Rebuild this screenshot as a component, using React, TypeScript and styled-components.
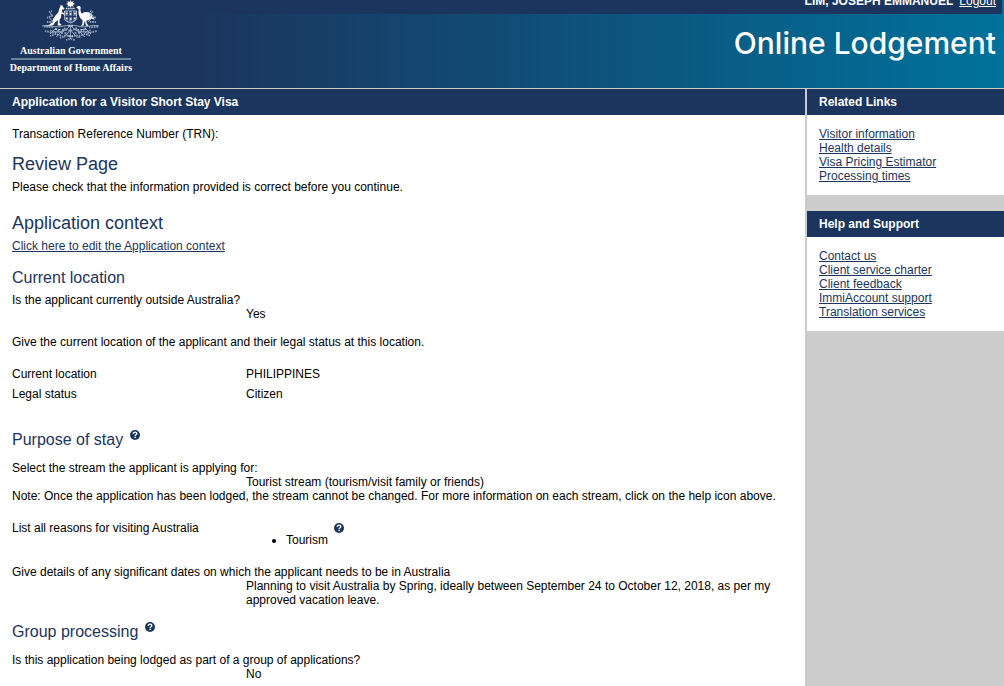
import React from "react";
import styled, { createGlobalStyle } from "styled-components";

const navy = "#1b355e";
const grey = "#cccccc";

const GlobalStyle = createGlobalStyle`
  *, *::before, *::after { box-sizing: border-box; }
  html, body { margin: 0; background: ${grey}; }
  body {
    font-family: "Liberation Sans", Arial, Helvetica, sans-serif;
    font-size: 12px;
    line-height: 14px;
    color: #000;
  }
  p, h1, h2, h3, ul, dl, dd { margin: 0; padding: 0; }
`;

const Page = styled.div`
  display: flex;
  flex-direction: column;
  min-height: 100vh;
`;

const Banner = styled.header`
  display: flex;
  justify-content: space-between;
  height: 89px;
  border-bottom: 1px solid ${grey};
  background: linear-gradient(to right, ${navy} 20%, #00729b 100%);
`;

const Brand = styled.div`
  display: flex;
  flex-direction: column;
  align-items: center;
  width: 120px;
  margin-left: 11px;
  font-family: "Liberation Serif", "Times New Roman", serif;
  font-size: 10px;
  font-weight: bold;
  color: #fff;
  white-space: nowrap;
`;

const Crest = styled.svg`
  width: 58px;
  height: 42px;
  flex: none;
`;

const Government = styled.span`
  align-self: stretch;
  height: 18px;
  line-height: 17px;
  text-align: center;
  border-bottom: 2px solid #6c7f9f;
`;

const Department = styled.span`
  line-height: 16px;
`;

const BannerSide = styled.div`
  display: flex;
  flex-direction: column;
  flex: 1;
`;

const AccountBar = styled.div`
  display: flex;
  justify-content: flex-end;
  gap: 6px;
  height: 14px;
  margin-right: 2px;
  padding-right: 6px;
  overflow: hidden;
  line-height: 3px;
  font-weight: bold;
  color: #fff;
  background: ${navy};
`;

const LogoutLink = styled.a`
  color: #fff;
  font-weight: normal;
`;

const ProductName = styled.h1`
  padding: 12px 8px 0;
  font-family: Inter, Lato, sans-serif;
  font-size: 30px;
  font-weight: 500;
  line-height: 34px;
  text-align: right;
  color: #fff;
`;

const Columns = styled.div`
  display: grid;
  grid-template-columns: minmax(0, 1fr) 197px;
  column-gap: 2px;
  flex: 1;
`;

const Main = styled.main`
  background: #fff;
`;

const Sidebar = styled.aside`
  display: flex;
  flex-direction: column;
  gap: 16px;
`;

const PanelTitle = styled.h2`
  padding: 0 12px;
  font-size: 12px;
  font-weight: bold;
  line-height: 26px;
  color: #fff;
  background: ${navy};
`;

const LinkPanel = styled.nav`
  background: #fff;
`;

const LinkList = styled.ul`
  padding: 12px 12px 12px;
  list-style: none;
`;

const TextLink = styled.a`
  color: ${navy};
`;

const Content = styled.div`
  padding: 12px 12px 5px;
`;

const Section = styled.section<{ $gap: number }>`
  padding-top: ${(p) => p.$gap}px;
`;

const Heading = styled.h2`
  margin-bottom: 5px;
  font-size: 18px;
  font-weight: normal;
  line-height: 22px;
  color: ${navy};
`;

const SubHeading = styled.h3<{ $spaced?: boolean }>`
  display: flex;
  gap: 7px;
  margin-bottom: ${(p) => (p.$spaced ? 11 : 5)}px;
  font-size: 16px;
  font-weight: normal;
  line-height: 20px;
  color: ${navy};
`;

const Block = styled.div<{ $gap?: number }>`
  margin-top: ${(p) => p.$gap ?? 0}px;
`;

const Answer = styled.p`
  padding-left: 234px;
`;

const Facts = styled.dl`
  display: grid;
  grid-template-columns: 234px 1fr;
  row-gap: 6px;
  margin-top: 18px;
`;

const ReasonRow = styled.div`
  display: grid;
  grid-template-columns: 234px auto 1fr;
  margin-top: 18px;
`;

const ReasonList = styled.ul`
  padding: 12px 6px 0 40px;
`;

const ReasonHelp = styled.div`
  padding-top: 2px;
`;

const HelpButton = styled.button`
  display: block;
  width: 10px;
  height: 10px;
  padding: 0;
  border: 0;
  background: none;
  cursor: pointer;

  svg {
    display: block;
    width: 10px;
    height: 10px;
  }
`;

function Help({ topic }: { topic: string }) {
  return (
    <HelpButton type="button" aria-label={`Help: ${topic}`}>
      <svg viewBox="0 0 10 10" aria-hidden="true">
        <circle cx="5" cy="5" r="5" fill={navy} />
        <path
          d="M3.3 3.9C3.3 2.7 4.1 2.1 5.1 2.1S6.8 2.8 6.8 3.7C6.8 4.8 5.2 4.8 5.2 6"
          fill="none"
          stroke="#fff"
          strokeWidth="1.4"
        />
        <rect x="4.4" y="6.7" width="1.5" height="1.4" fill="#fff" />
      </svg>
    </HelpButton>
  );
}

function CoatOfArms() {
  return (
    <Crest viewBox="0 0 58 42" role="img" aria-label="Commonwealth Coat of Arms">
      {/* star and wreath */}
      <path
        d="M28.500 0.000l1 2 2.200-1.100-.7 2.100 2 1-2 .8.6 2-2.100-.7-1 1.500-1-1.500-2.100.7.6-2-2-.8 2-1-.7-2.100 2.200 1.100z"
        fill="#fff"
      />
      <path d="M24 8.500h9" stroke="#dce2ed" strokeWidth="1.300" strokeDasharray="1.500 .6" />
      {/* shield */}
      <path
        d="M22.500 11h12v7.500c0 2-2.500 3-6 4.500-3.500-1.500-6-2.500-6-4.500z"
        fill="#5c7196"
        stroke="#c5cede"
        strokeWidth=".9"
      />
      <path d="M26.500 11v10M30.500 11v10M22.500 16.500h12" stroke="#1b355e" strokeWidth=".9" />
      <path
        d="M24 13.500h1.500M27.700 14h1.700M32 13.500h1.500M24 18.500h1.500M28 19h1.500M32 18.500h1.500"
        stroke="#fff"
        strokeWidth="1.400"
      />
      {/* kangaroo */}
      <path
        d="M18.600 4.500l1.100 1.600.7-1.300.6 2.100 1.500 1.700-.5 1-1.900-.1-.2 2.500 2.500 1.600-.3 1-2.800-.8-.3 3.500-1.300 2.300-.3 3.400 2 1.600-.3.900h-3.400l.3-5.600-3.100 2.600-1.500 2.500-4.100 1.200-4 .2.100-.8 4-.9 2.600-2.300 1.300-3.900 2.600-3.400 2.300-2.500 1.200-4.300.9-1.600z"
        fill="#fff"
      />
      {/* emu */}
      <path
        d="M34.200 7.500l1.900-1.400 1.600-.1 1 1.200-.3 3.400 1.200 3.100 3.100-1.700 4.300.3 3.500 2.800 2.100 4.700-3.600-1.200-2.300 1.700-2.400.3.600 2.900 1.800 2.200h-2.700l-1.200-5-1.300 5h-2.600l1.400-1.500.3-3.900-2.400-2.400-1.600-3.800-.1-5.300-.8-.2z"
        fill="#fff"
      />
      {/* wattle sprays */}
      <g fill="none" stroke="#a9b6cc" strokeWidth=".9">
        <path d="M0 26c5-1.400 9 .4 14 .8 6 .4 8-1.600 14.500-1.600s8.500 2 14.500 1.600c5-.4 9-2.200 14-.8" />
        <path d="M28.500 25C24 32 15 34 8 30M28.500 25C33 32 42 34 49 30M28.500 25v14M28.500 30l-7 8M28.500 30l7 8" />
        <path d="M11 22l-4-5M10 17l-2-5M46 22l5-5M48 17l2-5M14 28l-6 6M43 28l6 6M19 32l-5 5M38 32l5 5" />
      </g>
      <g fill="none" stroke="#93a2bd" strokeWidth="1.800" strokeDasharray="1.700 .9" strokeDashoffset=".4">
        <path d="M5 18l6-3M7 12l3-1M48 11l3 1M48 15l6 3M5 22h6M48 22h6" />
        <path d="M2 26.500l10 1M47 27.500l10-1M3 31l9 2 5-2M41 31l5 2 9-2M8 36l6-2 6 2M37 36l6-2 6 2" />
        <path d="M14 29l5 3 6-3M32 29l6 3 5-3M22 28l6 3 7-3M18 38l6-3 5 2 5-2 5 3M24 40l4-1M29 39l4 1" />
      </g>
      <path
        d="M13 29l9 1M19 33l7 0M44 29l-9 1M38 33l-7 0M26 36h5M26 26h5"
        fill="none"
        stroke="#e8edf5"
        strokeWidth="1"
        strokeDasharray="2 1.500"
      />
    </Crest>
  );
}

function LinkGroup({ title, links }: { title: string; links: string[] }) {
  return (
    <LinkPanel aria-label={title}>
      <PanelTitle>{title}</PanelTitle>
      <LinkList>
        {links.map((link) => (
          <li key={link}>
            <TextLink href="#">{link}</TextLink>
          </li>
        ))}
      </LinkList>
    </LinkPanel>
  );
}

const relatedLinks = [
  "Visitor information",
  "Health details",
  "Visa Pricing Estimator",
  "Processing times",
];

const supportLinks = [
  "Contact us",
  "Client service charter",
  "Client feedback",
  "ImmiAccount support",
  "Translation services",
];

export default function App() {
  return (
    <Page>
      <GlobalStyle />
      <Banner>
        <Brand>
          <CoatOfArms />
          <Government>Australian Government</Government>
          <Department>Department of Home Affairs</Department>
        </Brand>
        <BannerSide>
          <AccountBar>
            <span>LIM, JOSEPH EMMANUEL</span>
            <LogoutLink href="#">Logout</LogoutLink>
          </AccountBar>
          <ProductName>Online Lodgement</ProductName>
        </BannerSide>
      </Banner>

      <Columns>
        <Main>
          <PanelTitle>Application for a Visitor Short Stay Visa</PanelTitle>
          <Content>
            <p>Transaction Reference Number (TRN):</p>

            <Section $gap={12}>
              <Heading>Review Page</Heading>
              <p>Please check that the information provided is correct before you continue.</p>
            </Section>

            <Section $gap={18}>
              <Heading>Application context</Heading>
              <TextLink href="#">Click here to edit the Application context</TextLink>
            </Section>

            <Section $gap={15}>
              <SubHeading>Current location</SubHeading>
              <p>Is the applicant currently outside Australia?</p>
              <Answer>Yes</Answer>
              <Block $gap={14}>
                Give the current location of the applicant and their legal status at this location.
              </Block>
              <Facts>
                <dt>Current location</dt>
                <dd>PHILIPPINES</dd>
                <dt>Legal status</dt>
                <dd>Citizen</dd>
              </Facts>
            </Section>

            <Section $gap={29}>
              <SubHeading $spaced>
                Purpose of stay
                <Help topic="Purpose of stay" />
              </SubHeading>
              <p>Select the stream the applicant is applying for:</p>
              <Answer>Tourist stream (tourism/visit family or friends)</Answer>
              <p>
                Note: Once the application has been lodged, the stream cannot be changed. For more
                information on each stream, click on the help icon above.
              </p>
              <ReasonRow>
                <p>List all reasons for visiting Australia</p>
                <ReasonList>
                  <li>Tourism</li>
                </ReasonList>
                <ReasonHelp>
                  <Help topic="Reasons for visiting Australia" />
                </ReasonHelp>
              </ReasonRow>
              <Block $gap={18}>
                <p>
                  Give details of any significant dates on which the applicant needs to be in
                  Australia
                </p>
                <Answer>
                  Planning to visit Australia by Spring, ideally between September 24 to October 12,
                  2018, as per my approved vacation leave.
                </Answer>
              </Block>
            </Section>

            <Section $gap={15}>
              <SubHeading $spaced>
                Group processing
                <Help topic="Group processing" />
              </SubHeading>
              <p>Is this application being lodged as part of a group of applications?</p>
              <Answer>No</Answer>
            </Section>
          </Content>
        </Main>

        <Sidebar>
          <LinkGroup title="Related Links" links={relatedLinks} />
          <LinkGroup title="Help and Support" links={supportLinks} />
        </Sidebar>
      </Columns>
    </Page>
  );
}
